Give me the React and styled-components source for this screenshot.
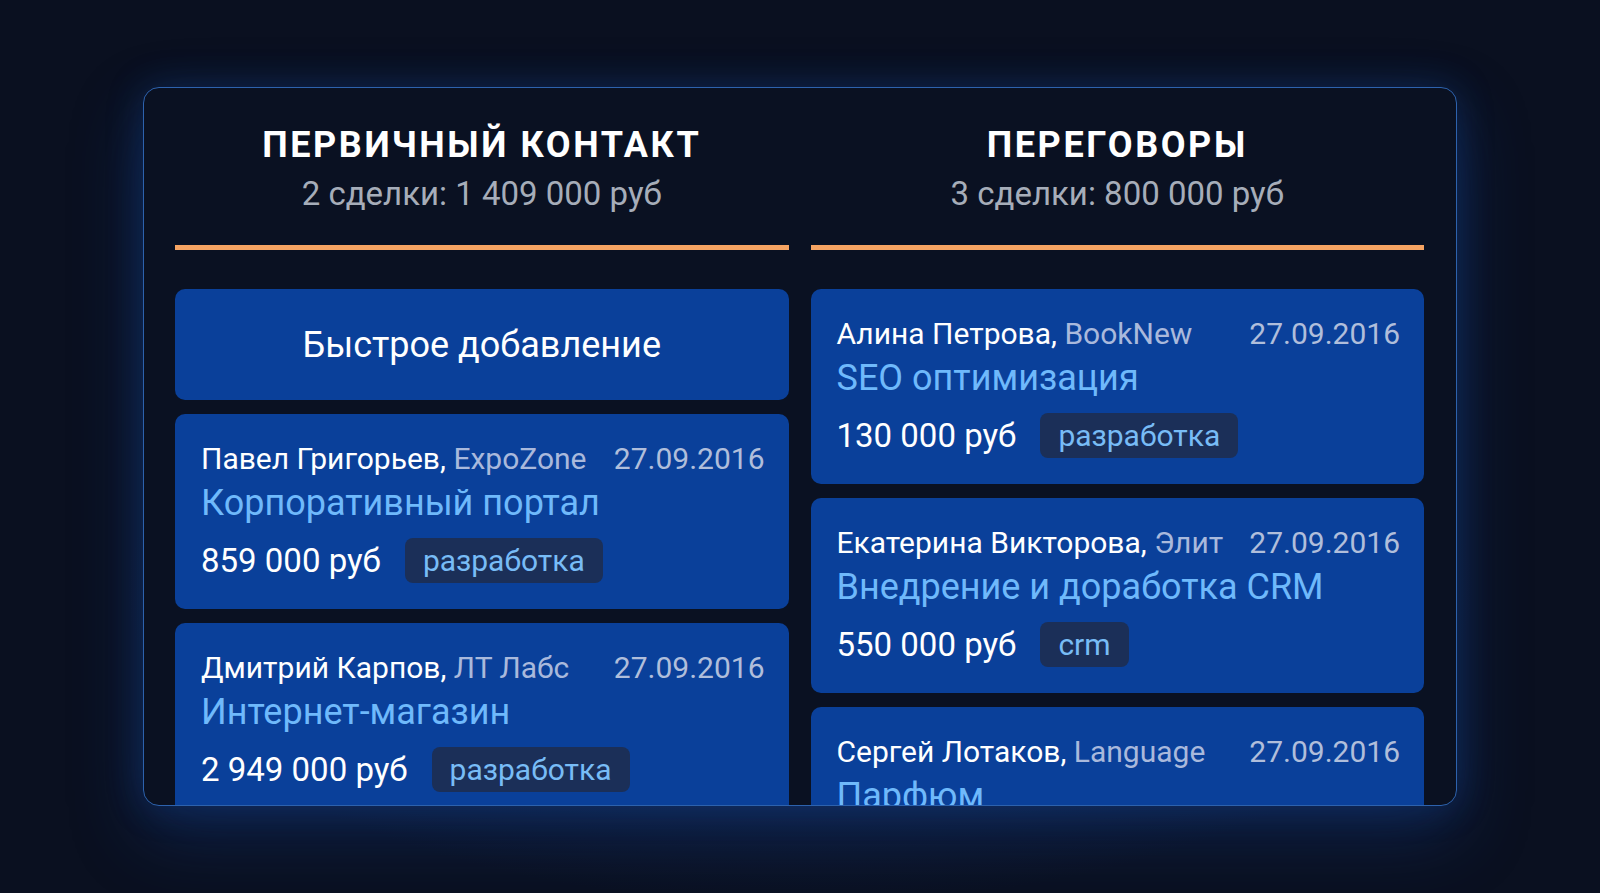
import React from "react";
import styled, { createGlobalStyle } from "styled-components";

const Global = createGlobalStyle`
  html, body { margin: 0; padding: 0; }
  body {
    background: #0a1020;
    font-family: Roboto, "Noto Sans", "DejaVu Sans", sans-serif;
  }
`;

const Page = styled.div`
  width: 1600px;
  height: 893px;
  overflow: hidden;
  box-sizing: border-box;
  padding-top: 87px;
  background:
    radial-gradient(ellipse 900px 420px at 50% 66%, rgba(22, 52, 110, 0.55), rgba(10, 16, 32, 0) 75%),
    #0a1020;
`;

const Panel = styled.div`
  width: 1314px;
  height: 719px;
  margin: 0 auto;
  box-sizing: border-box;
  border: 1.5px solid #2d62ad;
  border-radius: 16px;
  background: #0a1122;
  box-shadow: 0 0 36px rgba(24, 78, 170, 0.3), 0 28px 70px rgba(20, 66, 150, 0.38);
  overflow: hidden;
  padding: 35px 32px 0 31px;
  display: grid;
  grid-template-columns: 1fr 1fr;
  column-gap: 22px;
`;

const Column = styled.div`
  display: flex;
  flex-direction: column;
  min-width: 0;
`;

const Header = styled.div`
  text-align: center;
  padding-bottom: 31px;
  border-bottom: 5px solid #f6a463;
  margin-bottom: 39px;
`;

const Title = styled.div`
  color: #ffffff;
  font-size: 36px;
  line-height: 44px;
  font-weight: 700;
  letter-spacing: 2.6px;
`;

const Sub = styled.div`
  margin-top: 7px;
  color: #a6adb9;
  font-size: 33px;
  line-height: 40px;
`;

const Cards = styled.div`
  display: flex;
  flex-direction: column;
  gap: 14px;
`;

const QuickAdd = styled.div`
  height: 111px;
  border-radius: 10px;
  background: #0a409a;
  color: #ffffff;
  font-size: 36px;
  display: flex;
  align-items: center;
  justify-content: center;
`;

const Card = styled.div`
  flex-shrink: 0;
  border-radius: 10px;
  background: #0a409a;
  padding: 24px 24px 26px 26px;
`;

const TopRow = styled.div`
  display: flex;
  justify-content: space-between;
  font-size: 30px;
  line-height: 42px;
  white-space: nowrap;
`;

const Person = styled.span`
  color: #ffffff;
`;

const Company = styled.span`
  color: #a9b9dc;
`;

const DateText = styled.span`
  color: #b0bedb;
`;

const DealTitle = styled.div`
  color: #6fb9fb;
  font-size: 36px;
  line-height: 46px;
  white-space: nowrap;
`;

const PriceRow = styled.div`
  margin-top: 12px;
  display: flex;
  align-items: center;
  gap: 24px;
`;

const Price = styled.span`
  color: #ffffff;
  font-size: 33px;
`;

const Tag = styled.span`
  height: 45px;
  display: inline-flex;
  align-items: center;
  padding: 0 18px;
  border-radius: 8px;
  background: #1b2f58;
  color: #78bcf6;
  font-size: 30px;
`;

const columns = [
  {
    title: "ПЕРВИЧНЫЙ КОНТАКТ",
    sub: "2 сделки: 1 409 000 руб",
    quick: true,
    deals: [
      { person: "Павел Григорьев", company: "ExpoZone", title: "Корпоративный портал", price: "859 000 руб", tag: "разработка" },
      { person: "Дмитрий Карпов", company: "ЛТ Лабс", title: "Интернет-магазин", price: "2 949 000 руб", tag: "разработка" },
    ],
  },
  {
    title: "ПЕРЕГОВОРЫ",
    sub: "3 сделки: 800 000 руб",
    quick: false,
    deals: [
      { person: "Алина Петрова", company: "BookNew", title: "SEO оптимизация", price: "130 000 руб", tag: "разработка" },
      { person: "Екатерина Викторова", company: "Элит", title: "Внедрение и доработка CRM", price: "550 000 руб", tag: "crm" },
      { person: "Сергей Лотаков", company: "Language", title: "Парфюм", price: "320 000 руб", tag: "разработка" },
    ],
  },
];

export default function App() {
  return (
    <>
      <Global />
      <Page>
        <Panel>
          {columns.map((col) => (
            <Column key={col.title}>
              <Header>
                <Title>{col.title}</Title>
                <Sub>{col.sub}</Sub>
              </Header>
              <Cards>
                {col.quick && <QuickAdd>Быстрое добавление</QuickAdd>}
                {col.deals.map((d) => (
                  <Card key={d.person}>
                    <TopRow>
                      <span>
                        <Person>{d.person}, </Person>
                        <Company>{d.company}</Company>
                      </span>
                      <DateText>27.09.2016</DateText>
                    </TopRow>
                    <DealTitle>{d.title}</DealTitle>
                    <PriceRow>
                      <Price>{d.price}</Price>
                      <Tag>{d.tag}</Tag>
                    </PriceRow>
                  </Card>
                ))}
              </Cards>
            </Column>
          ))}
        </Panel>
      </Page>
    </>
  );
}
